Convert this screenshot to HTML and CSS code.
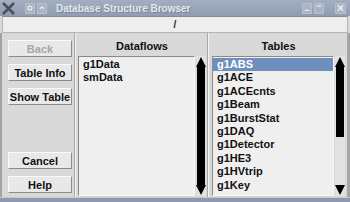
FILE: index.html
```html
<!DOCTYPE html>
<html lang="en">
    <head>
        <meta charset="UTF-8">
        <title>Database Structure Browser</title>
        <link rel="stylesheet" href="styles.css">
    </head>
    <body>
        <div class="window">
            <div class="titlebar">
                <div class="tb-left">
                    <svg class="tb-x" width="13" height="13" viewBox="0 0 13 13">
                        <path d="M1 1 L12 12 M12 1 L1 12" stroke="#4b4f57" stroke-width="2.6"/>
                    </svg>
                    <span class="tb-btn">
                        <svg width="10" height="10" viewBox="0 0 10 10"><circle cx="5" cy="5" r="2.5" fill="none" stroke="#eef1f5" stroke-width="1.4"/></svg>
                    </span>
                    <span class="tb-btn">
                        <svg width="10" height="10" viewBox="0 0 10 10"><path d="M2.5 6 L5 3.5 L7.5 6" fill="none" stroke="#eef1f5" stroke-width="1.4"/></svg>
                    </span>
                </div>
                <div class="tb-title">Database Structure Browser</div>
                <div class="tb-right">
                    <span class="tb-btn">
                        <svg width="10" height="10" viewBox="0 0 10 10"><path d="M2 8 H8" stroke="#eef1f5" stroke-width="1.4"/></svg>
                    </span>
                    <span class="tb-btn">
                        <svg width="10" height="10" viewBox="0 0 10 10"><path d="M2 2.5 H8" stroke="#eef1f5" stroke-width="1.4"/></svg>
                    </span>
                    <span class="tb-btn tb-close">
                        <svg width="10" height="10" viewBox="0 0 10 10"><path d="M2 2 L8 8 M8 2 L2 8" stroke="#eef1f5" stroke-width="1.6"/></svg>
                    </span>
                </div>
            </div>

            <div class="pathbar">/</div>

            <div class="main">
                <div class="sidebar">
                    <button class="btn" disabled>Back</button>
                    <button class="btn">Table Info</button>
                    <button class="btn">Show Table</button>
                    <button class="btn btn-bottom">Cancel</button>
                    <button class="btn">Help</button>
                </div>

                <div class="panel panel-flows">
                    <div class="panel-head">Dataflows</div>
                    <div class="list-wrap">
                        <ul class="list">
                            <li>g1Data</li>
                            <li>smData</li>
                        </ul>
                        <div class="scrollbar">
                            <div class="arrow-up"></div>
                            <div class="thumb full"></div>
                            <div class="arrow-down"></div>
                        </div>
                    </div>
                </div>

                <div class="panel panel-tables">
                    <div class="panel-head">Tables</div>
                    <div class="list-wrap">
                        <ul class="list">
                            <li class="selected">g1ABS</li>
                            <li>g1ACE</li>
                            <li>g1ACEcnts</li>
                            <li>g1Beam</li>
                            <li>g1BurstStat</li>
                            <li>g1DAQ</li>
                            <li>g1Detector</li>
                            <li>g1HE3</li>
                            <li>g1HVtrip</li>
                            <li>g1Key</li>
                        </ul>
                        <div class="scrollbar">
                            <div class="arrow-up"></div>
                            <div class="thumb" style="height: 70px"></div>
                            <div class="trough"></div>
                            <div class="arrow-down"></div>
                        </div>
                    </div>
                </div>
            </div>
            <div class="frame-bottom"></div>
        </div>
    </body>
</html>
```

FILE: styles.css
```css
* {
    box-sizing: border-box;
}

body {
    margin: 0;
    padding: 0;
    font-family: "Liberation Sans", Arial, sans-serif;
    background-color: #d9d9d9;
}

.window {
    width: 350px;
    height: 202px;
    display: flex;
    flex-direction: column;
    background-color: #d9d9d9;
    overflow: hidden;
}

/* title bar */
.titlebar {
    height: 16px;
    display: flex;
    align-items: center;
    background: linear-gradient(#a3aec0, #8f9cb1);
    padding: 0 4px 0 2px;
}

.tb-left,
.tb-right {
    display: flex;
    align-items: center;
    gap: 2px;
}

.tb-x {
    margin-right: 8px;
}

.tb-btn {
    width: 10px;
    height: 11px;
    display: flex;
    align-items: center;
    justify-content: center;
    background-color: #aab4c4;
    border: 1px solid #b7c0cd;
}

.tb-close {
    margin-left: 9px;
    width: 11px;
}

.tb-title {
    flex: 1;
    padding-left: 9px;
    font-size: 10px;
    font-weight: bold;
    color: #e4e8ee;
    text-shadow: 1px 1px 0 #7c889b;
    white-space: nowrap;
}

/* path bar */
.pathbar {
    height: 17px;
    margin: 0 2px;
    background-color: #eeeeee;
    border: 1px solid #b5b5b5;
    border-top-color: #8a8a8a;
    text-align: center;
    font-size: 10px;
    font-weight: bold;
    line-height: 15px;
    color: #222;
}

/* main area */
.main {
    flex: 1;
    display: flex;
    border-left: 2px solid #a4a4a4;
    border-right: 2px solid #a4a4a4;
}

.sidebar {
    width: 73px;
    display: flex;
    flex-direction: column;
    gap: 7px;
    padding: 7px 0 4px 6px;
    border-right: 1px solid #a8a8a8;
}

.btn {
    width: 64px;
    height: 17px;
    padding: 0;
    font-family: "Liberation Sans", Arial, sans-serif;
    font-size: 11px;
    font-weight: bold;
    color: #111;
    background-color: #e8e8e8;
    border: 1px solid;
    border-color: #fafafa #8c8c8c #8c8c8c #fafafa;
}

.btn:disabled {
    color: #a6a6a6;
}

.btn-bottom {
    margin-top: auto;
}

.panel {
    display: flex;
    flex-direction: column;
    border-left: 1px solid #f4f4f4;
    border-right: 1px solid #a8a8a8;
    padding: 0 1px 1px 2px;
}

.panel-flows {
    width: 133px;
}

.panel-tables {
    flex: 1;
    padding-left: 3px;
    padding-right: 2px;
}

.panel-head {
    height: 23px;
    text-align: center;
    font-size: 11px;
    font-weight: bold;
    line-height: 26px;
    color: #111;
}

.list-wrap {
    flex: 1;
    display: flex;
}

.list {
    flex: 1;
    margin: 0;
    padding: 1px 0 0 0;
    list-style: none;
    background-color: #efefef;
    border: 1px solid;
    border-color: #8a8a8a #f8f8f8 #f8f8f8 #8a8a8a;
    font-size: 11px;
    font-weight: bold;
    color: #111;
}

.list li {
    height: 13.4px;
    line-height: 13.4px;
    padding-left: 4px;
    white-space: nowrap;
}

.list li.selected {
    background-color: #6e8fbd;
    color: #ffffff;
}

/* scrollbar */
.scrollbar {
    width: 10px;
    margin-left: 1px;
    display: flex;
    flex-direction: column;
    align-items: center;
    padding: 1px 0;
    background-color: #e2e2e2;
}

.arrow-up {
    width: 0;
    height: 0;
    border-left: 5px solid transparent;
    border-right: 5px solid transparent;
    border-bottom: 10px solid #000;
}

.arrow-down {
    width: 0;
    height: 0;
    border-left: 5px solid transparent;
    border-right: 5px solid transparent;
    border-top: 10px solid #000;
}

.thumb {
    width: 8px;
    background-color: #000;
}

.thumb.full {
    flex: 1;
}

.trough {
    flex: 1;
}

.frame-bottom {
    height: 5px;
    background: linear-gradient(#c9c9c9 0, #c9c9c9 1px, #8d9ab0 1px);
}
```
